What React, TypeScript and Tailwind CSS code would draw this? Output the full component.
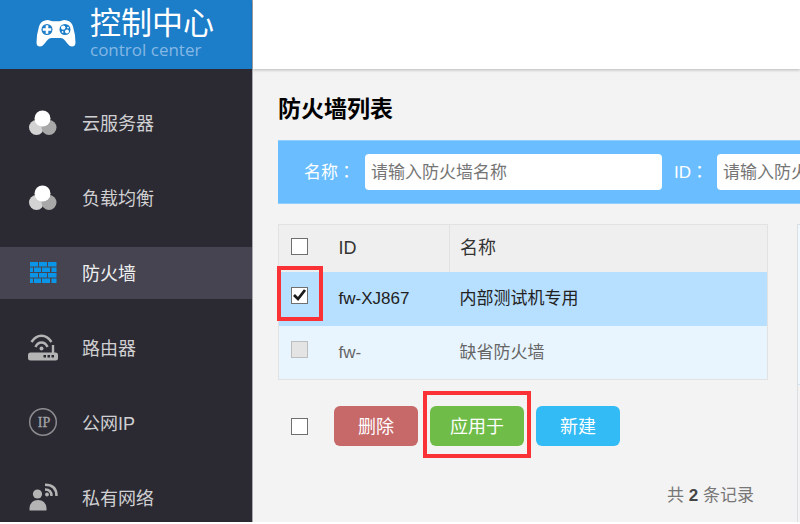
import clsx from "clsx";

const navItems = [
  { label: "云服务器", Icon: CirclesIcon },
  { label: "负载均衡", Icon: CirclesIcon },
  { label: "防火墙", Icon: WallIcon, active: true },
  { label: "路由器", Icon: RouterIcon },
  { label: "公网IP", Icon: PublicIpIcon },
  { label: "私有网络", Icon: PrivateNetworkIcon },
];

const firewalls = [
  { id: "fw-XJ867", name: "内部测试机专用", selected: true },
  { id: "fw-", name: "缺省防火墙", selected: false },
];

function GamepadIcon() {
  return (
    <svg viewBox="0 0 40 28" className="h-7 w-10 shrink-0" aria-hidden="true">
      <path
        d="M9 1.500Q12 .6 14 1.600q1 .6 2.500 .6h7Q25 2.200 26 1.600q2-1 5-.1 4.500 1 6 6Q39.600 16 39.500 24q-.3 3.500-3.500 3.500-2.300 0-4-2.300L28.500 21Q27 19 24.500 19h-9q-2.500 0-4 2L8 25.200Q6.300 27.500 4 27.500.8 27.500.5 24 .4 16 3 7.500q1.500-5 6-6Z"
        fill="#fff"
      />
      <circle cx="11" cy="10.500" r="5.500" fill="#1c7dc8" />
      <path d="M9.700 6.300h2.600v2.900h2.900v2.600h-2.900v2.900H9.700v-2.900H6.800V9.200h2.900Z" fill="#fff" />
      <circle cx="29" cy="10.500" r="5.500" fill="#1c7dc8" />
      <circle cx="27.200" cy="8.600" r="2.200" fill="#fff" />
      <circle cx="31" cy="12.400" r="2" fill="#fff" />
      <circle cx="32" cy="8.600" r=".9" fill="#fff" />
      <circle cx="26.600" cy="12.900" r=".9" fill="#fff" />
    </svg>
  );
}

function CirclesIcon() {
  return (
    <svg viewBox="0 0 30 30" className="size-[30px]" aria-hidden="true">
      <circle cx="8.500" cy="19.500" r="7.500" fill="#d3d3d3" />
      <circle cx="21" cy="19.500" r="7.500" fill="#a8a8a8" />
      <circle cx="14.500" cy="10.500" r="8" fill="#fff" />
    </svg>
  );
}

function WallIcon() {
  return (
    <svg viewBox="0 0 30 30" className="size-[30px]" aria-hidden="true" fill="#0b95e8">
      <path d="M2 4h8v4.500H2zM11 4h8v4.500h-8zM20 4h8.500v4.500H20z" />
      <path d="M2 9.500h3v4.500H2zM6 9.500h7v4.500H6zM14 9.500h8v4.500h-8zM23.500 9.500h5v4.500h-5z" />
      <path d="M2 15h8v4.500H2zM11 15h8v4.500h-8zM20 15h8.500v4.500H20z" />
      <path d="M2 20.500h3V25H2zM6 20.500h7V25H6zM14 20.500h8V25h-8zM23.500 20.500h5V25h-5z" />
    </svg>
  );
}

function RouterIcon() {
  return (
    <svg viewBox="0 0 30 30" className="size-[30px]" aria-hidden="true" fill="none">
      <path d="M3.500 9Q7.500 2.800 13.500 2.800t10 6.200" stroke="#b4b4b4" strokeWidth="2.500" />
      <path d="M7.500 14q2-4.500 6-4.500t6 4.500" stroke="#b4b4b4" strokeWidth="2.500" />
      <circle cx="13.500" cy="15.500" r="2" fill="#b4b4b4" />
      <path d="M25 12v9" stroke="#b4b4b4" strokeWidth="2.400" />
      <rect x="0" y="19.500" width="30" height="8" rx="2.500" fill="#b4b4b4" />
      <path d="M15.500 22h2.500v2.500h-2.500zM19.500 22H22v2.500h-2.500zM23.500 22H26v2.500h-2.500z" fill="#2b2a33" />
    </svg>
  );
}

function PublicIpIcon() {
  return (
    <svg viewBox="0 0 30 30" className="size-[30px]" aria-hidden="true">
      <circle cx="15" cy="14" r="13.300" fill="none" stroke="#8c8c90" strokeWidth="1.500" />
      <text
        x="16"
        y="19"
        fontSize="14"
        textAnchor="middle"
        fontFamily="'Liberation Serif', serif"
        fill="#a4a4a6"
        stroke="#a4a4a6"
        strokeWidth=".3"
      >
        IP
      </text>
    </svg>
  );
}

function PrivateNetworkIcon() {
  return (
    <svg viewBox="0 0 30 30" className="size-[30px]" aria-hidden="true" fill="none">
      <circle cx="9.500" cy="11" r="4.600" fill="#b4b4b4" />
      <path d="M1.500 27v-2q1-8 8.500-8t8.500 8v2q0 .5-.8.500H2.300q-.8 0-.8-.5Z" fill="#b4b4b4" />
      <circle cx="19" cy="11.500" r="1.900" fill="#b4b4b4" />
      <path d="M17 6.500q6.500 0 6.500 6.500M17 1.800q11.500 0 11.500 11.200" stroke="#b4b4b4" strokeWidth="2.500" />
    </svg>
  );
}

function Checkbox({ label, checked, disabled }: { label: string; checked?: boolean; disabled?: boolean }) {
  return (
    <span className="grid size-[17px] shrink-0">
      <input
        type="checkbox"
        aria-label={label}
        defaultChecked={checked}
        disabled={disabled}
        className="peer col-start-1 row-start-1 size-[17px] appearance-none border border-[#6f6f6f] bg-white disabled:border-[#bdbdbd] disabled:bg-[#e4e4e4]"
      />
      <svg
        viewBox="0 0 17 17"
        aria-hidden="true"
        className="pointer-events-none invisible col-start-1 row-start-1 peer-checked:visible"
      >
        <path d="M3 8 7 12l7-9" fill="none" stroke="#1a1a1a" strokeWidth="2.800" />
      </svg>
    </span>
  );
}

// red frame around a control that the reader should click
function Highlight({ className }: { className: string }) {
  return <span className={clsx("pointer-events-none absolute border-4 border-[#fb3235]", className)} />;
}

// full-width colon, centred in its box as the TC font draws it
function Colon() {
  return <span className="font-['Noto_Sans_CJK_TC',sans-serif]">：</span>;
}

function Sidebar() {
  return (
    <aside className="flex w-[253px] shrink-0 flex-col border-r border-[#a9a9ad] bg-[#2b2a33]">
      <div className="flex h-[69px] shrink-0 items-center gap-3.5 bg-[#1c7dc8] pb-1 pl-9 text-white">
        <GamepadIcon />
        <div className="pt-0.5">
          <div className="text-[31px] leading-8">控制中心</div>
          <div className="font-['Open_Sans',sans-serif] text-[17px] leading-5 text-[#85b8e4]">control center</div>
        </div>
      </div>
      <nav className="min-h-0 flex-1 overflow-hidden pt-7">
        <ul className="flex flex-col gap-[23px]">
          {navItems.map(({ label, Icon, active }) => (
            <li key={label}>
              <a
                href="#"
                className={clsx(
                  "flex h-[52px] items-center gap-6 pl-7 text-[18px]",
                  active ? "bg-[#454450] text-[#f0f0f0]" : "text-[#d0d0d2]",
                )}
              >
                <Icon />
                <span className="pt-0.5">{label}</span>
              </a>
            </li>
          ))}
        </ul>
      </nav>
    </aside>
  );
}

function SearchBar() {
  return (
    <form className="flex h-16 w-max items-center gap-3 border-y border-[#8fcdff] bg-[#6abeff] pr-6 pl-[26px] text-[17px] text-white">
      <label htmlFor="fw-name" className="w-[49px] shrink-0 whitespace-nowrap">
        名称
        <Colon />
      </label>
      <input
        id="fw-name"
        placeholder="请输入防火墙名称"
        className="h-9 w-[297px] shrink-0 rounded bg-white px-1.5 pt-0.5 text-gray-800 placeholder:text-[#757575]"
      />
      <label htmlFor="fw-id" className="w-[31px] shrink-0 whitespace-nowrap">
        ID
        <Colon />
      </label>
      <input
        id="fw-id"
        placeholder="请输入防火墙ID"
        className="h-9 w-[297px] shrink-0 rounded bg-white px-1.5 pt-0.5 text-gray-800 placeholder:text-[#757575]"
      />
    </form>
  );
}

function FirewallTable() {
  return (
    <table className="w-full table-fixed border-collapse border border-[#e2e2e2] text-left text-[17px]">
      <thead>
        <tr className="h-[47px] bg-[#efefef] text-[18px] text-[#333]">
          <th className="w-12 pb-1 pl-3 font-normal">
            <Checkbox label="全选" />
          </th>
          <th className="w-[123px] border-r border-[#e2e2e2] pl-3 font-normal">ID</th>
          <th className="pl-2.5 font-normal">名称</th>
        </tr>
      </thead>
      <tbody>
        {firewalls.map(({ id, name, selected }) => (
          <tr key={id} className={clsx("h-[54px]", selected ? "bg-[#b7dfff] text-[#222]" : "bg-[#e8f5ff] text-[#666]")}>
            <td className="relative pb-1.5 pl-3">
              <Checkbox label={id} checked={selected} disabled={!selected} />
              {selected && <Highlight className="-top-1.5 -left-0.5 h-[55px] w-[46px]" />}
            </td>
            <td className="pl-3">{id}</td>
            <td className="pl-2.5">{name}</td>
          </tr>
        ))}
      </tbody>
    </table>
  );
}

function Actions() {
  return (
    <div className="mt-[26px] flex items-center gap-3 pl-[13px] text-[18px] text-white">
      <span className="mr-3.5">
        <Checkbox label="选择全部" />
      </span>
      <button type="button" className="h-10 rounded-md bg-[#c76869] px-6 pt-0.5">
        删除
      </button>
      <button type="button" className="relative h-10 rounded-md bg-[#70bc48] px-5 pt-0.5">
        应用于
        <Highlight className="-inset-x-[7px] -top-[15px] -bottom-3" />
      </button>
      <button type="button" className="h-10 rounded-md bg-[#33bbf5] px-6 pt-0.5">
        新建
      </button>
    </div>
  );
}

export default function App() {
  return (
    <div className="flex h-screen overflow-hidden border-b-2 border-white bg-[#f3f3f3] font-['Liberation_Sans','Noto_Sans_CJK_SC',sans-serif]">
      <Sidebar />
      <div className="flex min-w-0 flex-1 flex-col">
        <header className="h-[69px] shrink-0 bg-white shadow-[0_1px_3px_rgba(0,0,0,0.25)]" />
        <main className="min-h-0 flex-1 overflow-hidden pt-6 pl-[25px]">
          <h1 className="mb-3.5 text-[23px] leading-[33px] font-bold text-black">防火墙列表</h1>
          <SearchBar />
          <div className="mt-5 flex h-full gap-[29px]">
            <section className="min-w-0 flex-1">
              <FirewallTable />
              <Actions />
              <p className="mt-[37px] pr-3.5 text-right text-[17px] text-[#777]">
                共 <b className="text-[#444]">2</b> 条记录
              </p>
            </section>
            <div className="w-[3px] shrink-0 border-t border-l border-[#dcdfe2]">
              <div className="h-40 border-b border-[#cfe6f7] bg-[#eff8ff]" />
            </div>
          </div>
        </main>
      </div>
    </div>
  );
}
